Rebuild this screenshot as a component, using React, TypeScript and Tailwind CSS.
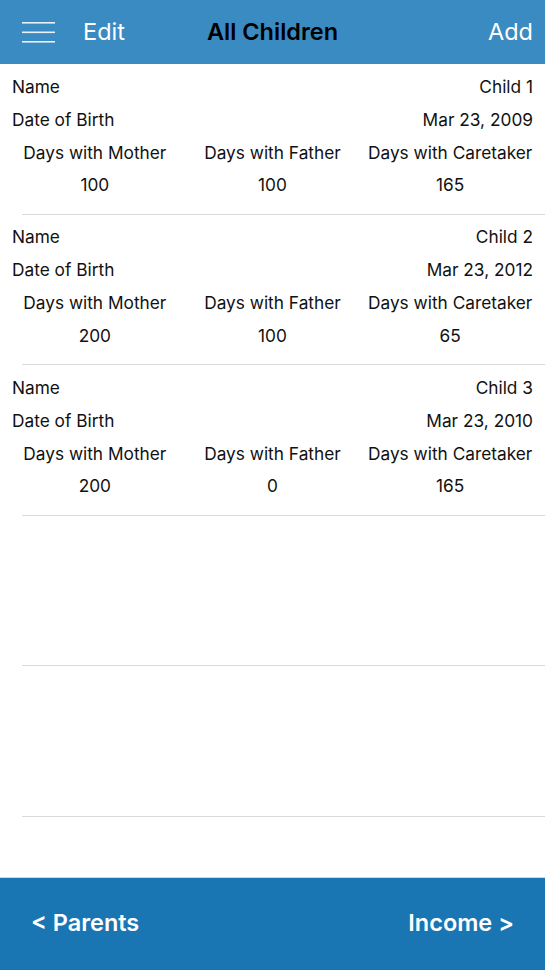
const children = [
  { name: "Child 1", dob: "Mar 23, 2009", mother: 100, father: 100, caretaker: 165 },
  { name: "Child 2", dob: "Mar 23, 2012", mother: 200, father: 100, caretaker: 65 },
  { name: "Child 3", dob: "Mar 23, 2010", mother: 200, father: 0, caretaker: 165 },
];

function ChildRow({ child }: { child: (typeof children)[number] }) {
  return (
    <div className="h-[150.5px] flex flex-col pt-[6px] border-b border-[#d9d9dc] ml-[22px]">
      <div className="-ml-[22px] pl-3 pr-3 flex justify-between h-[33px] items-center">
        <span>Name</span>
        <span>{child.name}</span>
      </div>
      <div className="-ml-[22px] pl-3 pr-3 flex justify-between h-[33px] items-center">
        <span>Date of Birth</span>
        <span>{child.dob}</span>
      </div>
      <div className="-ml-[22px] px-[6px] grid grid-cols-3 text-center">
        <span className="h-[33px] flex items-center justify-center">Days with Mother</span>
        <span className="h-[33px] flex items-center justify-center">Days with Father</span>
        <span className="h-[33px] flex items-center justify-center whitespace-nowrap">Days with Caretaker</span>
        <span className="h-[32px] flex items-center justify-center">{child.mother}</span>
        <span className="h-[32px] flex items-center justify-center">{child.father}</span>
        <span className="h-[32px] flex items-center justify-center">{child.caretaker}</span>
      </div>
    </div>
  );
}

export default function App() {
  return (
    <div
      className="h-[970px] w-full flex flex-col bg-white text-[17.3px] text-[#111]"
      style={{ fontFamily: "Inter, 'Liberation Sans', sans-serif" }}
    >
      {/* Top nav */}
      <header className="h-[64px] shrink-0 bg-[#3a8bc1] flex items-center px-[22px] relative">
        <svg width="34" height="24" viewBox="0 0 34 24" className="shrink-0">
          <rect x="0" y="2" width="33" height="1.6" fill="#e8f1f8" />
          <rect x="0" y="11.5" width="33" height="1.6" fill="#e8f1f8" />
          <rect x="0" y="21" width="33" height="1.6" fill="#e8f1f8" />
        </svg>
        <span className="ml-[27px] text-[23.5px] text-white">Edit</span>
        <h1 className="absolute left-1/2 -translate-x-1/2 text-[23.5px] font-semibold text-black">
          All Children
        </h1>
        <span className="ml-auto mr-[-10px] text-[23.5px] text-white">Add</span>
      </header>

      {/* List */}
      <main className="flex-1 flex flex-col">
        {children.map((c) => (
          <ChildRow key={c.name} child={c} />
        ))}
        <div className="h-[150.5px] border-b border-[#d9d9dc] ml-[22px]" />
        <div className="h-[150.5px] border-b border-[#d9d9dc] ml-[22px]" />
      </main>

      {/* Bottom bar */}
      <footer className="h-[93px] shrink-0 bg-[#1a75b3] border-t border-[#cfd8df] flex items-center justify-between pl-[31px] pr-[31px] pb-[2px] text-[23.5px] font-semibold text-white">
        <span>&lt; Parents</span>
        <span>Income &gt;</span>
      </footer>
    </div>
  );
}
